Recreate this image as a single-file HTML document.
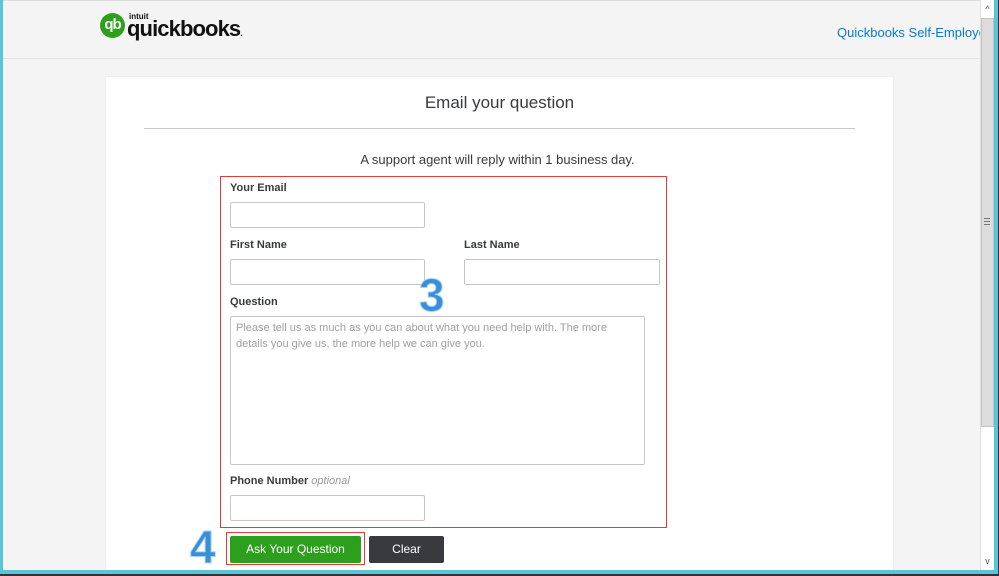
<!DOCTYPE html>
<html><head><style>
*{margin:0;padding:0;box-sizing:border-box}
body{width:999px;height:576px;overflow:hidden;background:#f4f4f4;font-family:"Liberation Sans",sans-serif;position:relative}
.a{position:absolute}
label{position:absolute;font-size:11px;font-weight:bold;color:#393a3d}
.in{position:absolute;background:#fff;border:1px solid #c6c6c6;border-radius:2px;height:26px}
</style></head><body>
<div class="a" style="left:0;top:0;width:3px;height:576px;background:#5bc4d6"></div>
<div class="a" style="left:3px;top:0;width:977px;height:1px;background:#ddd"></div>
<div class="a" style="left:3px;top:58px;width:977px;height:1px;background:#e2e2e2"></div>
<div class="a" style="left:100px;top:13px;width:25px;height:25px;border-radius:50%;background:#2ca01c;color:#fff;font-size:15px;font-weight:bold;text-align:center;line-height:24px;letter-spacing:-1px">qb</div>
<div class="a" style="left:129px;top:12px;font-size:8px;font-weight:bold;color:#111">intuit</div>
<div class="a" style="left:127px;top:16px;font-size:22px;font-weight:bold;color:#111;letter-spacing:-0.9px">quickbooks<span style="font-size:9px">.</span></div>
<div class="a" style="left:837px;top:25px;font-size:13px;color:#0d78c8;white-space:nowrap;width:143px;overflow:hidden">Quickbooks Self-Employed</div>
<div class="a" style="left:105px;top:76px;width:789px;height:500px;background:#fff;border:1px solid #eee"></div>
<div class="a" style="left:105px;top:93px;width:789px;text-align:center;font-size:17px;color:#393a3d">Email your question</div>
<div class="a" style="left:144px;top:128px;width:711px;height:1px;background:#c8c8c8"></div>
<div class="a" style="left:103px;top:152px;width:789px;text-align:center;font-size:13px;color:#393a3d">A support agent will reply within 1 business day.</div>
<div class="a" style="left:220px;top:176px;width:447px;height:352px;border:1px solid #e23c3c"></div>
<label style="left:230px;top:182px">Your Email</label>
<div class="in" style="left:230px;top:202px;width:195px"></div>
<label style="left:230px;top:239px">First Name</label>
<div class="in" style="left:230px;top:259px;width:195px"></div>
<label style="left:464px;top:239px">Last Name</label>
<div class="in" style="left:464px;top:259px;width:196px"></div>
<label style="left:230px;top:296px">Question</label>
<div class="in" style="left:230px;top:316px;width:415px;height:149px;padding:3px 5px;font-size:11px;color:#a0a0a0;line-height:16px">Please tell us as much as you can about what you need help with. The more details you give us, the more help we can give you.</div>
<label style="left:230px;top:475px">Phone Number <i style="font-weight:normal;color:#999">optional</i></label>
<div class="in" style="left:230px;top:495px;width:195px"></div>
<div class="a" style="left:419px;top:268px;font-size:46px;font-weight:bold;color:#3b8fd6;-webkit-text-stroke:1px #a9d6f5">3</div>
<div class="a" style="left:190px;top:522px;font-size:46px;font-weight:bold;color:#3b8fd6;-webkit-text-stroke:1px #a9d6f5;line-height:50px">4</div>
<div class="a" style="left:226px;top:532px;width:139px;height:33px;border:1px solid #e23c3c"></div>
<div class="a" style="left:230px;top:536px;width:131px;height:27px;background:#2ca01c;border-radius:2px;color:#fff;font-size:12px;text-align:center;line-height:27px">Ask Your Question</div>
<div class="a" style="left:369px;top:536px;width:75px;height:27px;background:#393a3d;border-radius:2px;color:#fff;font-size:12px;text-align:center;line-height:27px">Clear</div>
<div class="a" style="left:980px;top:0;width:14px;height:570px;background:#fff;border-left:1px solid #e0e0e0"></div>
<div class="a" style="left:981px;top:4px;width:13px;height:13px;font-size:9px;color:#555;text-align:center">^</div>
<div class="a" style="left:981px;top:18px;width:13px;height:409px;background:#dcdcdc;border:1px solid #c4c4c4"></div>
<div class="a" style="left:984px;top:218px;width:6px;height:7px;border-top:1px solid #777;border-bottom:1px solid #777"><div style="margin-top:2px;height:1px;background:#777"></div></div>
<div class="a" style="left:981px;top:556px;width:13px;height:13px;font-size:9px;color:#555;text-align:center">v</div>
<div class="a" style="left:994px;top:0;width:4px;height:576px;background:#5bc4d6"></div>
<div class="a" style="left:998px;top:0;width:1px;height:576px;background:#333"></div>
<div class="a" style="left:0;top:570px;width:998px;height:4px;background:#5bc4d6"></div>
<div class="a" style="left:0;top:574px;width:999px;height:2px;background:#333"></div>
</body></html>
